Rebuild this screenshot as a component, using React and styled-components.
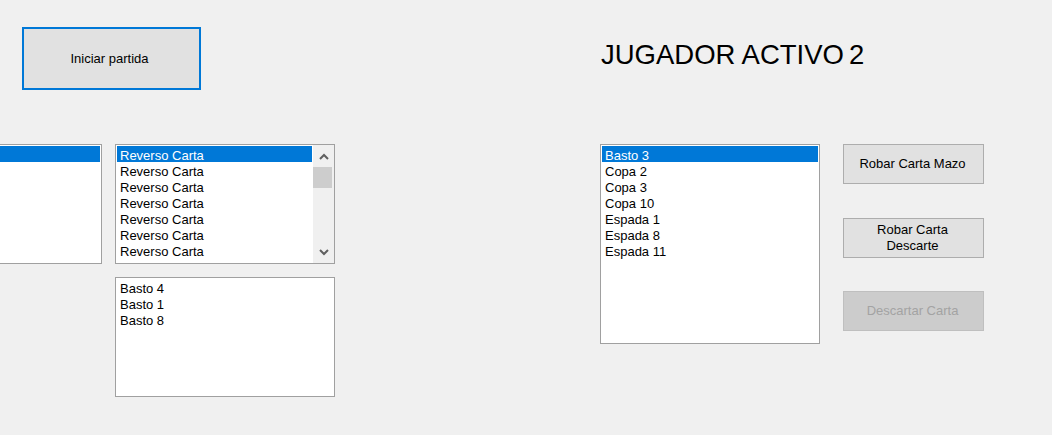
import React from "react";
import styled, { createGlobalStyle } from "styled-components";

const GlobalStyle = createGlobalStyle`
  html, body {
    margin: 0;
    padding: 0;
    background-color: #f0f0f0;
  }
  * {
    box-sizing: border-box;
  }
`;

const reversoCartas = Array(7).fill("Reverso Carta");
const descartes = ["Basto 4", "Basto 1", "Basto 8"];
const manoJugador = ["Basto 3", "Copa 2", "Copa 3", "Copa 10", "Espada 1", "Espada 8", "Espada 11"];

const Chevron = ({ up }) => (
  <svg width="10" height="7" viewBox="0 0 10 7">
    <polyline
      points={up ? "1,6 5,2 9,6" : "1,1 5,5 9,1"}
      fill="none"
      stroke="#606060"
      strokeWidth="2"
    />
  </svg>
);

const ListBox = ({ items = [], selected = 0, scroll, width = 220, height = 120, offset = 0 }) => (
  <StyledList $width={width} $height={height} $offset={offset}>
    <Items>
      {items.map((item, i) => (
        <Item key={i} $selected={i === selected}>
          {item}
        </Item>
      ))}
    </Items>
    {scroll && (
      <ScrollBar>
        <ArrowButton>
          <Chevron up />
        </ArrowButton>
        <Thumb />
        <Track />
        <ArrowButton>
          <Chevron />
        </ArrowButton>
      </ScrollBar>
    )}
  </StyledList>
);

export default function App() {
  return (
    <Form>
      <GlobalStyle />
      <Header>
        <StartButton>Iniciar partida</StartButton>
        <Title>
          JUGADOR ACTIVO
          <PlayerNumber>2</PlayerNumber>
        </Title>
      </Header>
      <Body>
        <ListBox items={["\u00a0"]} offset={-118} />
        <MiddleColumn>
          <ListBox items={reversoCartas} scroll />
          <ListBox items={descartes} selected={-1} />
        </MiddleColumn>
        <ListBox items={manoJugador} height={200} offset={265} />
        <ButtonColumn>
          <ActionButton>Robar Carta Mazo</ActionButton>
          <ActionButton $gap={34}>
            Robar Carta
            <br />
            Descarte
          </ActionButton>
          <ActionButton $gap={33} disabled>
            Descartar Carta
          </ActionButton>
        </ButtonColumn>
      </Body>
    </Form>
  );
}

const Form = styled.div`
  width: 1052px;
  height: 435px;
  overflow: hidden;
  background-color: #f0f0f0;
  padding-top: 27px;
  font-family: "Liberation Sans", Arial, sans-serif;
  color: #000;
`;

const Header = styled.div`
  display: flex;
  align-items: flex-start;
`;

const StartButton = styled.button`
  margin-left: 22px;
  width: 179px;
  height: 63px;
  background-color: #e1e1e1;
  border: 2px solid #0078d7;
  font-family: "Liberation Sans", Arial, sans-serif;
  font-size: 13px;
  color: #000;
  padding: 0 4px 0 0;
`;

const Title = styled.div`
  margin-left: 400px;
  margin-top: 14px;
  font-size: 27.5px;
  line-height: 27px;
  white-space: nowrap;
`;

const PlayerNumber = styled.span`
  margin-left: 5px;
`;

const Body = styled.div`
  display: flex;
  align-items: flex-start;
  margin-top: 54px;
`;

const MiddleColumn = styled.div`
  display: flex;
  flex-direction: column;
  gap: 13px;
  margin-left: 13px;
`;

const StyledList = styled.div`
  flex-shrink: 0;
  display: flex;
  width: ${(p) => p.$width}px;
  height: ${(p) => p.$height}px;
  margin-left: ${(p) => p.$offset}px;
  background-color: #fff;
  border: 1px solid #a0a0a0;
  overflow: hidden;
`;

const Items = styled.div`
  flex: 1;
  padding: 1px;
  overflow: hidden;
`;

const Item = styled.div`
  height: 16px;
  padding: 2px 0 0 3px;
  line-height: 16px;
  font-size: 13px;
  white-space: nowrap;
  color: ${(p) => (p.$selected ? "#fff" : "#000")};
  background-color: ${(p) => (p.$selected ? "#0078d7" : "transparent")};
`;

const ScrollBar = styled.div`
  width: 21px;
  display: flex;
  flex-direction: column;
  background-color: #f0f0f0;
`;

const ArrowButton = styled.div`
  height: 22px;
  display: flex;
  align-items: center;
  justify-content: center;
`;

const Thumb = styled.div`
  height: 21px;
  margin-right: 2px;
  background-color: #cdcdcd;
`;

const Track = styled.div`
  flex: 1;
`;

const ButtonColumn = styled.div`
  display: flex;
  flex-direction: column;
  margin-left: 23px;
`;

const ActionButton = styled.button`
  width: 141px;
  height: 40px;
  margin-top: ${(p) => p.$gap || 0}px;
  padding: 0 2px 0 0;
  background-color: ${(p) => (p.disabled ? "#cccccc" : "#e1e1e1")};
  border: 1px solid ${(p) => (p.disabled ? "#bfbfbf" : "#adadad")};
  font-family: "Liberation Sans", Arial, sans-serif;
  font-size: 13px;
  line-height: 16px;
  color: ${(p) => (p.disabled ? "#a3a3a3" : "#000")};
`;
